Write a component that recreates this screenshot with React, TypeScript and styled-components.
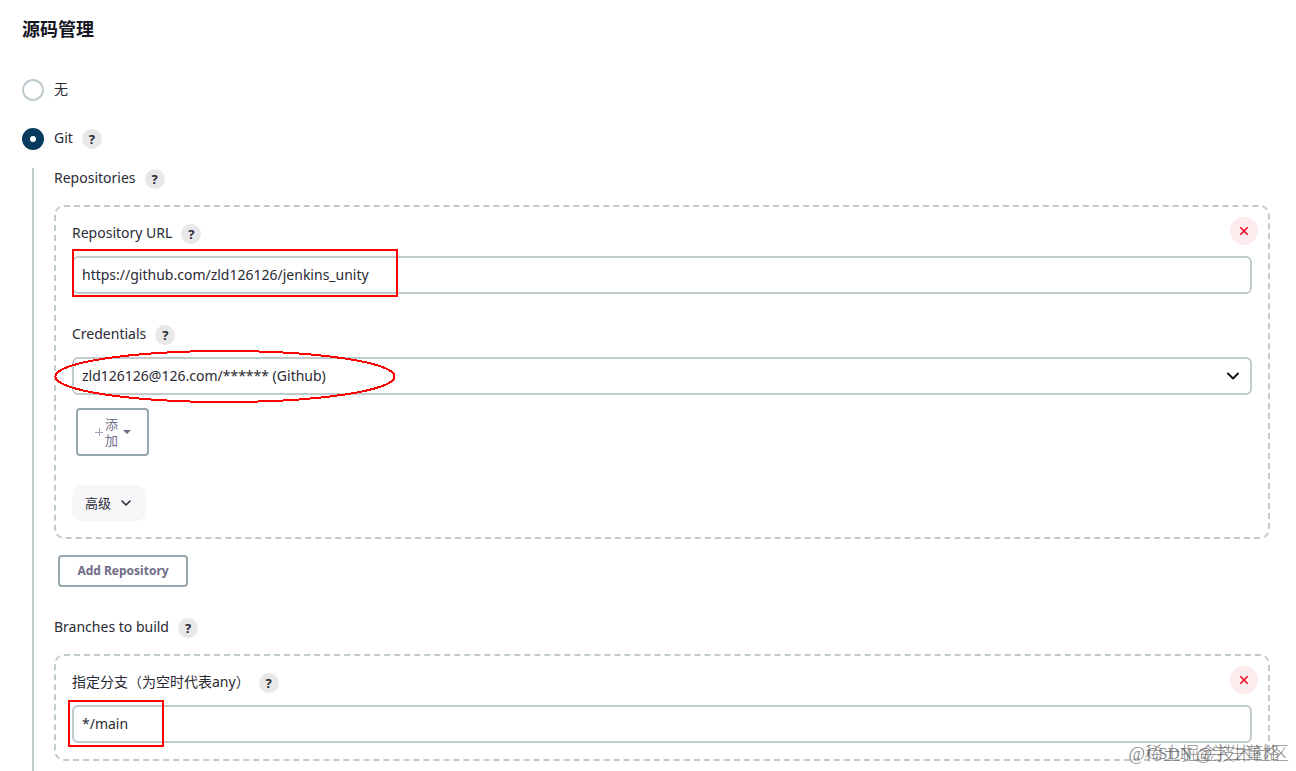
import React from "react";
import styled, { createGlobalStyle, css } from "styled-components";

const GlobalStyle = createGlobalStyle`
  *, *::before, *::after { box-sizing: border-box; }
  body {
    margin: 0;
    background: #fff;
    color: #2a2a35;
    font-family: "Noto Sans", "Noto Sans CJK SC", sans-serif;
    font-size: 14px;
    line-height: 20px;
  }
  button, input, select { font: inherit; color: inherit; margin: 0; }
`;

const Page = styled.main`
  position: relative;
  display: flex;
  flex-direction: column;
  min-height: 100vh;
  padding: 16px 26px 0 22px;
`;

const Title = styled.h2`
  margin: 0 0 37px;
  color: #14141f;
  font-size: 18px;
  font-weight: 700;
  line-height: 26px;
`;

const OptionRow = styled.div`
  display: flex;
  align-items: center;
  height: 22px;
  margin-bottom: 27px;

  & + & {
    margin-bottom: 18px;
  }
`;

const OptionLabel = styled.label`
  display: flex;
  align-items: center;
  gap: 10px;
`;

const Radio = styled.input`
  appearance: none;
  width: 22px;
  height: 22px;
  border: 2px solid #c0cbd0;
  border-radius: 50%;
  background: #fff;

  &:checked {
    border: 8px solid #073b5d;
  }
`;

const OptionText = styled.span`
  padding-bottom: 2px;
`;

const HelpButton = styled.button`
  flex: none;
  width: 20px;
  height: 20px;
  margin-left: 9px;
  padding: 0;
  border: 0;
  border-radius: 50%;
  background: #e8e8e8;
  font-size: 13px;
  font-weight: 700;
  line-height: 20px;
`;

const GitSettings = styled.section`
  flex: 1;
  margin-left: 10px;
  padding: 1px 0 10px 20px;
  border-left: 2px solid #c0cbd0;
`;

const LabelRow = styled.div<{ $gap: number }>`
  display: flex;
  align-items: center;
  height: 20px;
  margin-bottom: ${(p) => p.$gap}px;
`;

const LabelText = styled.label`
  padding-bottom: 2px;
`;

const Group = styled.div`
  position: relative;
  padding: 17px 16px 16px;
  border: 2px dashed #c0cbd0;
  border-radius: 10px;
`;

const Remove = styled.button`
  position: absolute;
  top: 10px;
  right: 10px;
  display: flex;
  align-items: center;
  justify-content: center;
  width: 28px;
  height: 28px;
  padding: 0;
  border: 0;
  border-radius: 50%;
  background: #fdebed;
  color: #e6001f;
`;

const Control = styled.div`
  position: relative;
`;

const fieldBox = css`
  display: block;
  width: 100%;
  height: 38px;
  border: 2px solid #c0cbd0;
  border-radius: 6px;
  background: #fff;
  outline: 0;
`;

const TextInput = styled.input`
  ${fieldBox}
  padding: 0 8px 2px;
`;

const Select = styled.select`
  ${fieldBox}
  padding: 0 8px;
  appearance: none;
`;

const SelectArrow = styled.svg`
  position: absolute;
  top: 12px;
  right: 12px;
  pointer-events: none;
`;

const Field = styled.div`
  & + & {
    margin-top: 31px;
  }
`;

const OutlineButton = styled.button`
  display: flex;
  align-items: center;
  justify-content: center;
  border: 2px solid #98a6ae;
  border-radius: 4px;
  background: #fff;
  color: #6f6c89;
`;

const AddCredential = styled(OutlineButton)`
  gap: 2px;
  width: 73px;
  height: 48px;
  margin: 13px 0 29px 4px;
  padding: 0;
  font-size: 13px;
  line-height: 16px;
`;

const StackedText = styled.span`
  width: 14px;
  margin-right: 2px;
`;

const AdvancedButton = styled.button`
  display: flex;
  align-items: center;
  gap: 9px;
  height: 36px;
  padding: 0 14px 0 13px;
  border: 0;
  border-radius: 10px;
  background: #f7f7fa;
  font-size: 13px;
`;

const AddRepository = styled(OutlineButton)`
  min-width: 130px;
  height: 32px;
  margin: 16px 0 31px 4px;
  padding: 0 16px;
  font-size: 12px;
  font-weight: 700;
`;

const MarkBox = styled.div<{ $top: number; $left: number; $width: number; $height: number }>`
  position: absolute;
  top: ${(p) => p.$top}px;
  left: ${(p) => p.$left}px;
  width: ${(p) => p.$width}px;
  height: ${(p) => p.$height}px;
  border: 2px solid #f00;
  pointer-events: none;
`;

const MarkEllipse = styled.svg`
  position: absolute;
  top: -8px;
  left: -18px;
  pointer-events: none;
`;

const Watermark = styled.div<{ $right: number; $size: number }>`
  position: absolute;
  right: ${(p) => p.$right}px;
  bottom: 4px;
  color: rgba(70, 70, 70, 0.65);
  font-size: ${(p) => p.$size}px;
  font-family: "Liberation Serif", "Noto Sans CJK SC", serif;
  font-weight: 300;
  line-height: 26px;
  white-space: nowrap;
  pointer-events: none;
`;

const Help = ({ topic }: { topic: string }) => (
  <HelpButton type="button" aria-label={`Help: ${topic}`}>?</HelpButton>
);

const RemoveButton = () => (
  <Remove type="button" aria-label="Delete">
    <svg width="10" height="10" viewBox="0 0 10 10" fill="none" stroke="currentColor" strokeWidth="1.5">
      <path d="M1.3 1.3 8.7 8.7M8.7 1.3 1.3 8.7" />
    </svg>
  </Remove>
);

export default function App() {
  return (
    <>
      <GlobalStyle />
      <Page>
        <Title>源码管理</Title>

        <OptionRow>
          <OptionLabel>
            <Radio type="radio" name="scm" />
            <OptionText>无</OptionText>
          </OptionLabel>
        </OptionRow>
        <OptionRow>
          <OptionLabel>
            <Radio type="radio" name="scm" defaultChecked />
            <OptionText>Git</OptionText>
          </OptionLabel>
          <Help topic="Git" />
        </OptionRow>

        <GitSettings>
          <LabelRow $gap={16}>
            <LabelText as="span">Repositories</LabelText>
            <Help topic="Repositories" />
          </LabelRow>
          <Group>
            <RemoveButton />
            <Field>
              <LabelRow $gap={12}>
                <LabelText htmlFor="url">Repository URL</LabelText>
                <Help topic="Repository URL" />
              </LabelRow>
              <Control>
                <TextInput id="url" defaultValue="https://github.com/zld126126/jenkins_unity" />
                <MarkBox $top={-7} $left={0} $width={326} $height={48} />
              </Control>
            </Field>
            <Field>
              <LabelRow $gap={12}>
                <LabelText htmlFor="credentials">Credentials</LabelText>
                <Help topic="Credentials" />
              </LabelRow>
              <Control>
                <Select id="credentials">
                  <option>zld126126@126.com/****** (Github)</option>
                </Select>
                <SelectArrow width="14" height="14" viewBox="0 0 14 14" fill="none" stroke="#14141f" strokeWidth="2" strokeLinecap="round" strokeLinejoin="round">
                  <path d="M2 4.5 7 9.5 12 4.5" />
                </SelectArrow>
                <MarkEllipse width="342" height="54" viewBox="0 0 342 54" fill="none" stroke="#f00" strokeWidth="2" shapeRendering="crispEdges">
                  <ellipse cx="171" cy="27.5" rx="169.5" ry="25.5" />
                </MarkEllipse>
              </Control>
            </Field>
            <AddCredential type="button">
              <svg width="8" height="8" viewBox="0 0 8 8" stroke="#a3a1b3" strokeWidth="1" shapeRendering="crispEdges">
                <path d="M4.5 0V8M0 4.5H8" />
              </svg>
              <StackedText>添加</StackedText>
              <svg width="8" height="4" viewBox="0 0 8 4" fill="currentColor">
                <path d="M0 0H8L4 4Z" />
              </svg>
            </AddCredential>
            <AdvancedButton type="button">
              高级
              <svg width="12" height="12" viewBox="0 0 12 12" fill="none" stroke="currentColor" strokeWidth="1.6" strokeLinecap="round" strokeLinejoin="round">
                <path d="M2 4 6 8 10 4" />
              </svg>
            </AdvancedButton>
          </Group>
          <AddRepository type="button">Add Repository</AddRepository>

          <LabelRow $gap={16}>
            <LabelText as="span">Branches to build</LabelText>
            <Help topic="Branches to build" />
          </LabelRow>
          <Group>
            <RemoveButton />
            <Field>
              <LabelRow $gap={12}>
                <LabelText htmlFor="branch">指定分支（为空时代表any）</LabelText>
                <Help topic="指定分支" />
              </LabelRow>
              <Control>
                <TextInput id="branch" defaultValue="*/main" />
                <MarkBox $top={-5} $left={-4} $width={96} $height={47} />
              </Control>
            </Field>
          </Group>
        </GitSettings>

        <Watermark $right={7} $size={18}>@稀土掘金技术社区</Watermark>
        <Watermark $right={16} $size={17}>CSDN @学生董格</Watermark>
      </Page>
    </>
  );
}
